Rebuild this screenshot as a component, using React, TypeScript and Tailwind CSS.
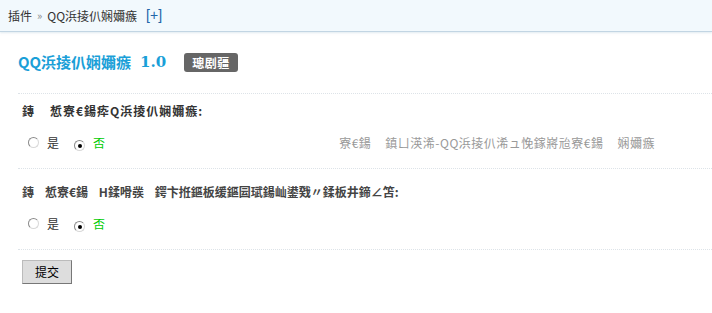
import React from 'react';

const cjk = '"Noto Sans CJK SC", "Liberation Sans", sans-serif';

const Radio: React.FC<{ checked?: boolean }> = ({ checked }) => (
  <span className="inline-flex w-[11px] h-[11px] rounded-full border border-[#8a8a8a] border-r-[#d8d8d8] border-b-[#d8d8d8] bg-white items-center justify-center">
    {checked && <span className="w-[4px] h-[4px] rounded-full bg-black" />}
  </span>
);

const Choice: React.FC = () => (
  <div className="flex items-center text-[12px]">
    <span className="ml-[6px]"><Radio /></span>
    <span className="ml-[8px] text-[#333]">是</span>
    <span className="ml-[15px]"><Radio checked /></span>
    <span className="ml-[8px] text-[#00cc00]">否</span>
  </div>
);

export default function App() {
  return (
    <div className="w-[712px] h-[313px] bg-white overflow-hidden" style={{ fontFamily: cjk }}>
      <div className="h-[32px] bg-[#f2f9fd] border-b border-[#c2d5e3] flex items-center pl-[8px] text-[12px] text-[#333] shadow-[0_1px_2px_rgba(194,213,227,0.5)]">
        <span>插件</span>
        <span className="mx-[5px] text-[#888] text-[11px]">»</span>
        <span>QQ浜掕仈娴嬭瘯</span>
        <span className="ml-[9px] text-[#2366a8] text-[14px] font-['Liberation_Sans']">[+]</span>
      </div>

      <div className="pl-[18px] pr-0">
        <div className="h-[61px] flex items-center">
          <span className="text-[#1a9fd8] font-bold text-[15px]">QQ浜掕仈娴嬭瘯</span>
          <span className="ml-[9px] text-[#1a9fd8] font-bold text-[15px] font-['DejaVu_Serif']">1.0</span>
          <span className="ml-[18px] bg-[#666] text-white font-bold text-[12px] rounded-[3px] px-[8px] h-[19px] leading-[19px] tracking-[0.5px]">璁剧疆</span>
        </div>

        <div className="border-t border-dotted border-[#dde3e8]" />

        <div className="pl-[4px] pt-[8px] pb-[10px] text-[12px] font-bold text-[#333] tracking-[1px]">鏄&nbsp;&nbsp;&nbsp;&nbsp;惁寮€鍚疩Q浜掕仈娴嬭瘯:</div>
        <div className="flex items-center h-[25px] pl-[4px]">
          <Choice />
          <span className="ml-auto mr-[57px] text-[12px] text-[#999] tracking-[0.5px]">
            寮€鍚<span className="inline-block w-[14px]" />鎮ㄩ渶浠-QQ浜掕仈浠ュ悗鎵嶈兘寮€鍚<span className="inline-block w-[14px]" />娴嬭瘯
          </span>
        </div>

        <div className="mt-[13px] border-t border-dotted border-[#dde3e8]" />

        <div className="pl-[4px] pt-[14px] pb-[10px] text-[12px] font-bold text-[#444]">鏄&nbsp;&nbsp;&nbsp;&nbsp;惁寮€鍚&nbsp;&nbsp;&nbsp;&nbsp;H鍒嗗彂&nbsp;&nbsp;&nbsp;&nbsp;鍔卞拰鏂板缓鏂囩珷鍚屾鍙戣〃鍒板井鍗∠笘:</div>
        <div className="flex items-center h-[25px] pl-[4px]">
          <Choice />
        </div>

        <div className="mt-[13px] border-t border-dotted border-[#dde3e8]" />

        <div className="pl-[4px] pt-[8px]">
          <button className="w-[50px] h-[24px] bg-[#ddd] border border-[#bbb] border-r-[#777] border-b-[#777] text-[12px] text-black">提交</button>
        </div>
      </div>
    </div>
  );
}
